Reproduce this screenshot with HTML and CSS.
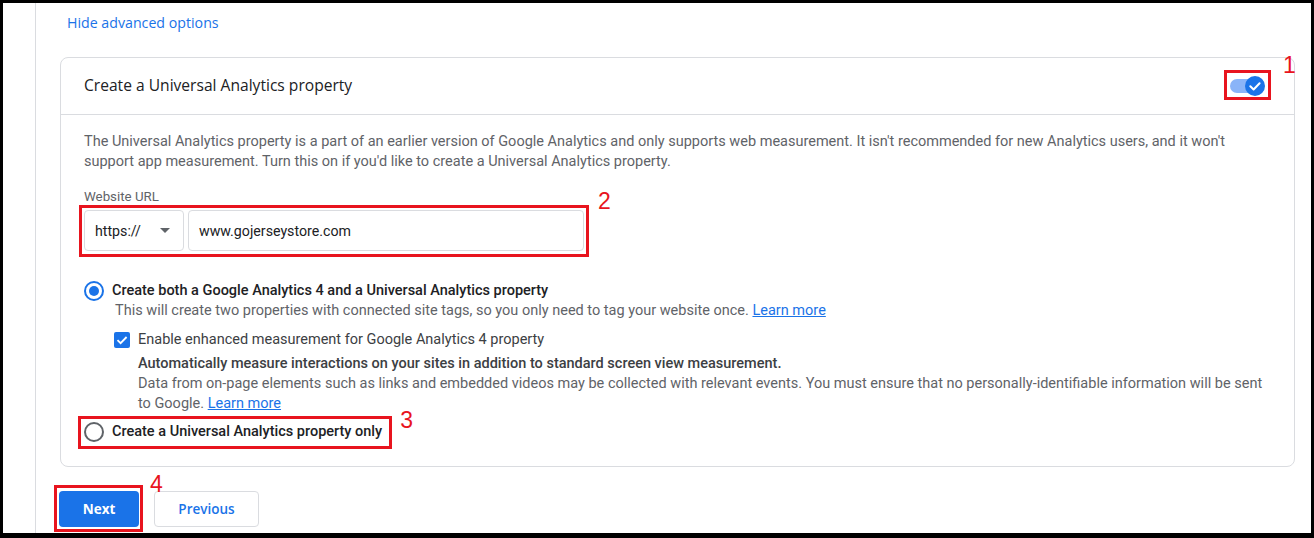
FILE: index.html
```html
<!DOCTYPE html>
<html>
<head>
<meta charset="utf-8">
<link rel="stylesheet" href="styles.css">
</head>
<body>
<div class="frame">
  <div class="gutter"></div>
  <div class="main">
    <div class="hide-link">Hide advanced options</div>
    <div class="card">
      <div class="card-head">
        <div class="card-title">Create a Universal Analytics property</div>
        <div class="anno anno-toggle">
          <svg class="toggle" width="36" height="20" viewBox="0 0 36 20">
            <rect x="0" y="3" width="30" height="14" rx="7" fill="#8ab4f8"/>
            <circle cx="25" cy="10" r="10" fill="#1a73e8"/>
            <path d="M20.3 10.3 L23.6 13.5 L29.6 7.2" fill="none" stroke="#fff" stroke-width="2" stroke-linecap="round" stroke-linejoin="round"/>
          </svg>
          <span class="mark"></span>
          <span class="num">1</span>
        </div>
      </div>
      <div class="card-body">
        <p class="desc">The Universal Analytics property is a part of an earlier version of Google Analytics and only supports web measurement. It isn't recommended for new Analytics users, and it won't support app measurement. Turn this on if you'd like to create a Universal Analytics property.</p>
        <div class="field-label">Website URL</div>
        <div class="anno anno-url">
          <div class="url-row">
            <div class="select">
              <span>https://</span>
              <span class="caret"></span>
            </div>
            <div class="input">www.gojerseystore.com</div>
          </div>
          <span class="mark"></span>
          <span class="num">2</span>
        </div>
        <div class="radio-row first">
          <span class="radio checked"></span>
          <span class="radio-label">Create both a Google Analytics 4 and a Universal Analytics property</span>
        </div>
        <div class="sub">This will create two properties with connected site tags, so you only need to tag your website once. <a class="link">Learn more</a></div>
        <div class="check-row">
          <span class="checkbox">
            <svg width="16" height="16" viewBox="0 0 16 16"><path d="M3.5 8.2 L6.6 11.2 L12.6 5" fill="none" stroke="#fff" stroke-width="1.8"/></svg>
          </span>
          <span class="check-label">Enable enhanced measurement for Google Analytics 4 property</span>
        </div>
        <div class="enhanced">
          <div class="strong">Automatically measure interactions on your sites in addition to standard screen view measurement.</div>
          <div class="data">Data from on-page elements such as links and embedded videos may be collected with relevant events. You must ensure that no personally-identifiable information will be sent to Google. <a class="link">Learn more</a></div>
        </div>
        <div class="anno anno-radio">
          <div class="radio-row">
            <span class="radio"></span>
            <span class="radio-label">Create a Universal Analytics property only</span>
          </div>
          <span class="mark"></span>
          <span class="num">3</span>
        </div>
      </div>
    </div>
    <div class="buttons">
      <div class="anno anno-next">
        <button class="btn btn-primary">Next</button>
        <span class="mark"></span>
        <span class="num">4</span>
      </div>
      <button class="btn btn-secondary">Previous</button>
    </div>
  </div>
</div>
</body>
</html>
```
FILE: styles.css
```css
* { box-sizing: border-box; }
html, body { margin: 0; padding: 0; background: #fff; }
body { font-family: Roboto, "Liberation Sans", sans-serif; font-size: 14.5px; color: #202124; }

.frame {
  width: 1314px;
  height: 538px;
  border-style: solid;
  border-color: #000;
  border-width: 3px 3px 5px 3px;
  display: flex;
  overflow: hidden;
}
.gutter { width: 33px; border-right: 1px solid #dadce0; flex: none; }
.main { flex: 1; padding: 10px 16px 0 24px; }

.hide-link {
  padding-left: 7px;
  font-family: "Open Sans", Roboto, sans-serif;
  font-weight: 500;
  font-size: 14.2px;
  line-height: 20px;
  color: #1a73e8;
}

.card {
  margin-top: 24px;
  border: 1px solid #dadce0;
  border-radius: 8px;
}
.card-head {
  height: 57px;
  border-bottom: 1px solid #dadce0;
  display: flex;
  align-items: center;
  justify-content: space-between;
  padding: 0 28px 0 23px;
}
.card-title {
  font-family: "Open Sans", Roboto, sans-serif;
  font-size: 15.6px;
  line-height: 22px;
  padding-bottom: 2px;
  color: #202124;
}
.card-body { padding: 17px 30px 24px 23px; }

.desc { margin: 0; line-height: 20px; color: #5f6368; }
.field-label { margin-top: 17px; font-size: 13.3px; line-height: 16px; color: #5f6368; }

.anno { position: relative; display: flex; width: fit-content; }
.mark { position: absolute; border: 3px solid #e8141e; pointer-events: none; }
.num {
  position: absolute;
  font-family: "Liberation Sans", Arial, sans-serif;
  font-size: 23px;
  line-height: 18px;
  color: #e8141e;
}

.toggle { display: block; }
.anno-toggle .mark { left: -6px; top: -6px; right: -5px; bottom: -4px; }
.anno-toggle .num { left: 53px; top: -20px; }

.anno-url { margin-top: 5px; width: 500px; }
.url-row { display: flex; gap: 4px; width: 500px; }
.select, .input {
  height: 41px;
  border: 1px solid #dadce0;
  border-radius: 4px;
  display: flex;
  align-items: center;
  font-size: 14.2px;
  color: #202124;
}
.select { width: 100px; padding: 0 13px 0 10px; justify-content: space-between; }
.caret { width: 0; height: 0; border-left: 5px solid transparent; border-right: 5px solid transparent; border-top: 5px solid #5f6368; }
.input { flex: 1; padding-left: 10px; }
.anno-url .mark { left: -5px; top: -5px; right: -5px; bottom: -6px; }
.anno-url .num { left: 514px; top: -18px; }

.radio-row { display: flex; align-items: center; gap: 8px; height: 20px; }
.radio-row.first { margin-top: 30px; }
.radio {
  width: 20px; height: 20px; border-radius: 50%;
  border: 2px solid #5f6368; flex: none; position: relative;
}
.radio.checked { border-color: #1a73e8; }
.radio.checked::after {
  content: ""; position: absolute; left: 3px; top: 3px; width: 10px; height: 10px;
  border-radius: 50%; background: #1a73e8;
}
.radio-label { font-weight: 500; color: #202124; line-height: 20px; }
.sub { padding-left: 31px; line-height: 20px; color: #5f6368; }
.link { color: #1a73e8; text-decoration: underline; }

.check-row { margin-top: 9px; padding-left: 30px; display: flex; align-items: center; gap: 8px; height: 20px; }
.checkbox { width: 16px; height: 16px; border-radius: 2px; background: #1a73e8; display: block; flex: none; }
.checkbox svg { display: block; }
.check-label { color: #3c4043; line-height: 20px; }
.enhanced { padding-left: 54px; margin-top: 4px; line-height: 20px; }
.strong { font-weight: 500; color: #3c4043; }
.data { color: #5f6368; }

.anno-radio { margin-top: 8px; }
.anno-radio .mark { left: -6px; top: -6px; right: -10px; bottom: -7px; }
.anno-radio .num { left: calc(100% + 18px); top: -11px; }

.buttons { margin-top: 24px; display: flex; gap: 15px; margin-left: -1px; }
.btn {
  height: 36px;
  border-radius: 4px;
  font-family: "Open Sans", Roboto, sans-serif;
  font-weight: 700;
  font-size: 13.5px;
  cursor: pointer;
  padding: 0;
}
.btn-primary { width: 80px; background: #1a73e8; color: #fff; border: none; }
.btn-secondary { width: 105px; background: #fff; color: #1a73e8; border: 1px solid #dadce0; font-weight: 600; }
.anno-next .mark { left: -5px; top: -6px; right: -4px; bottom: -5px; }
.anno-next .num { left: 91px; top: -16px; }
```
